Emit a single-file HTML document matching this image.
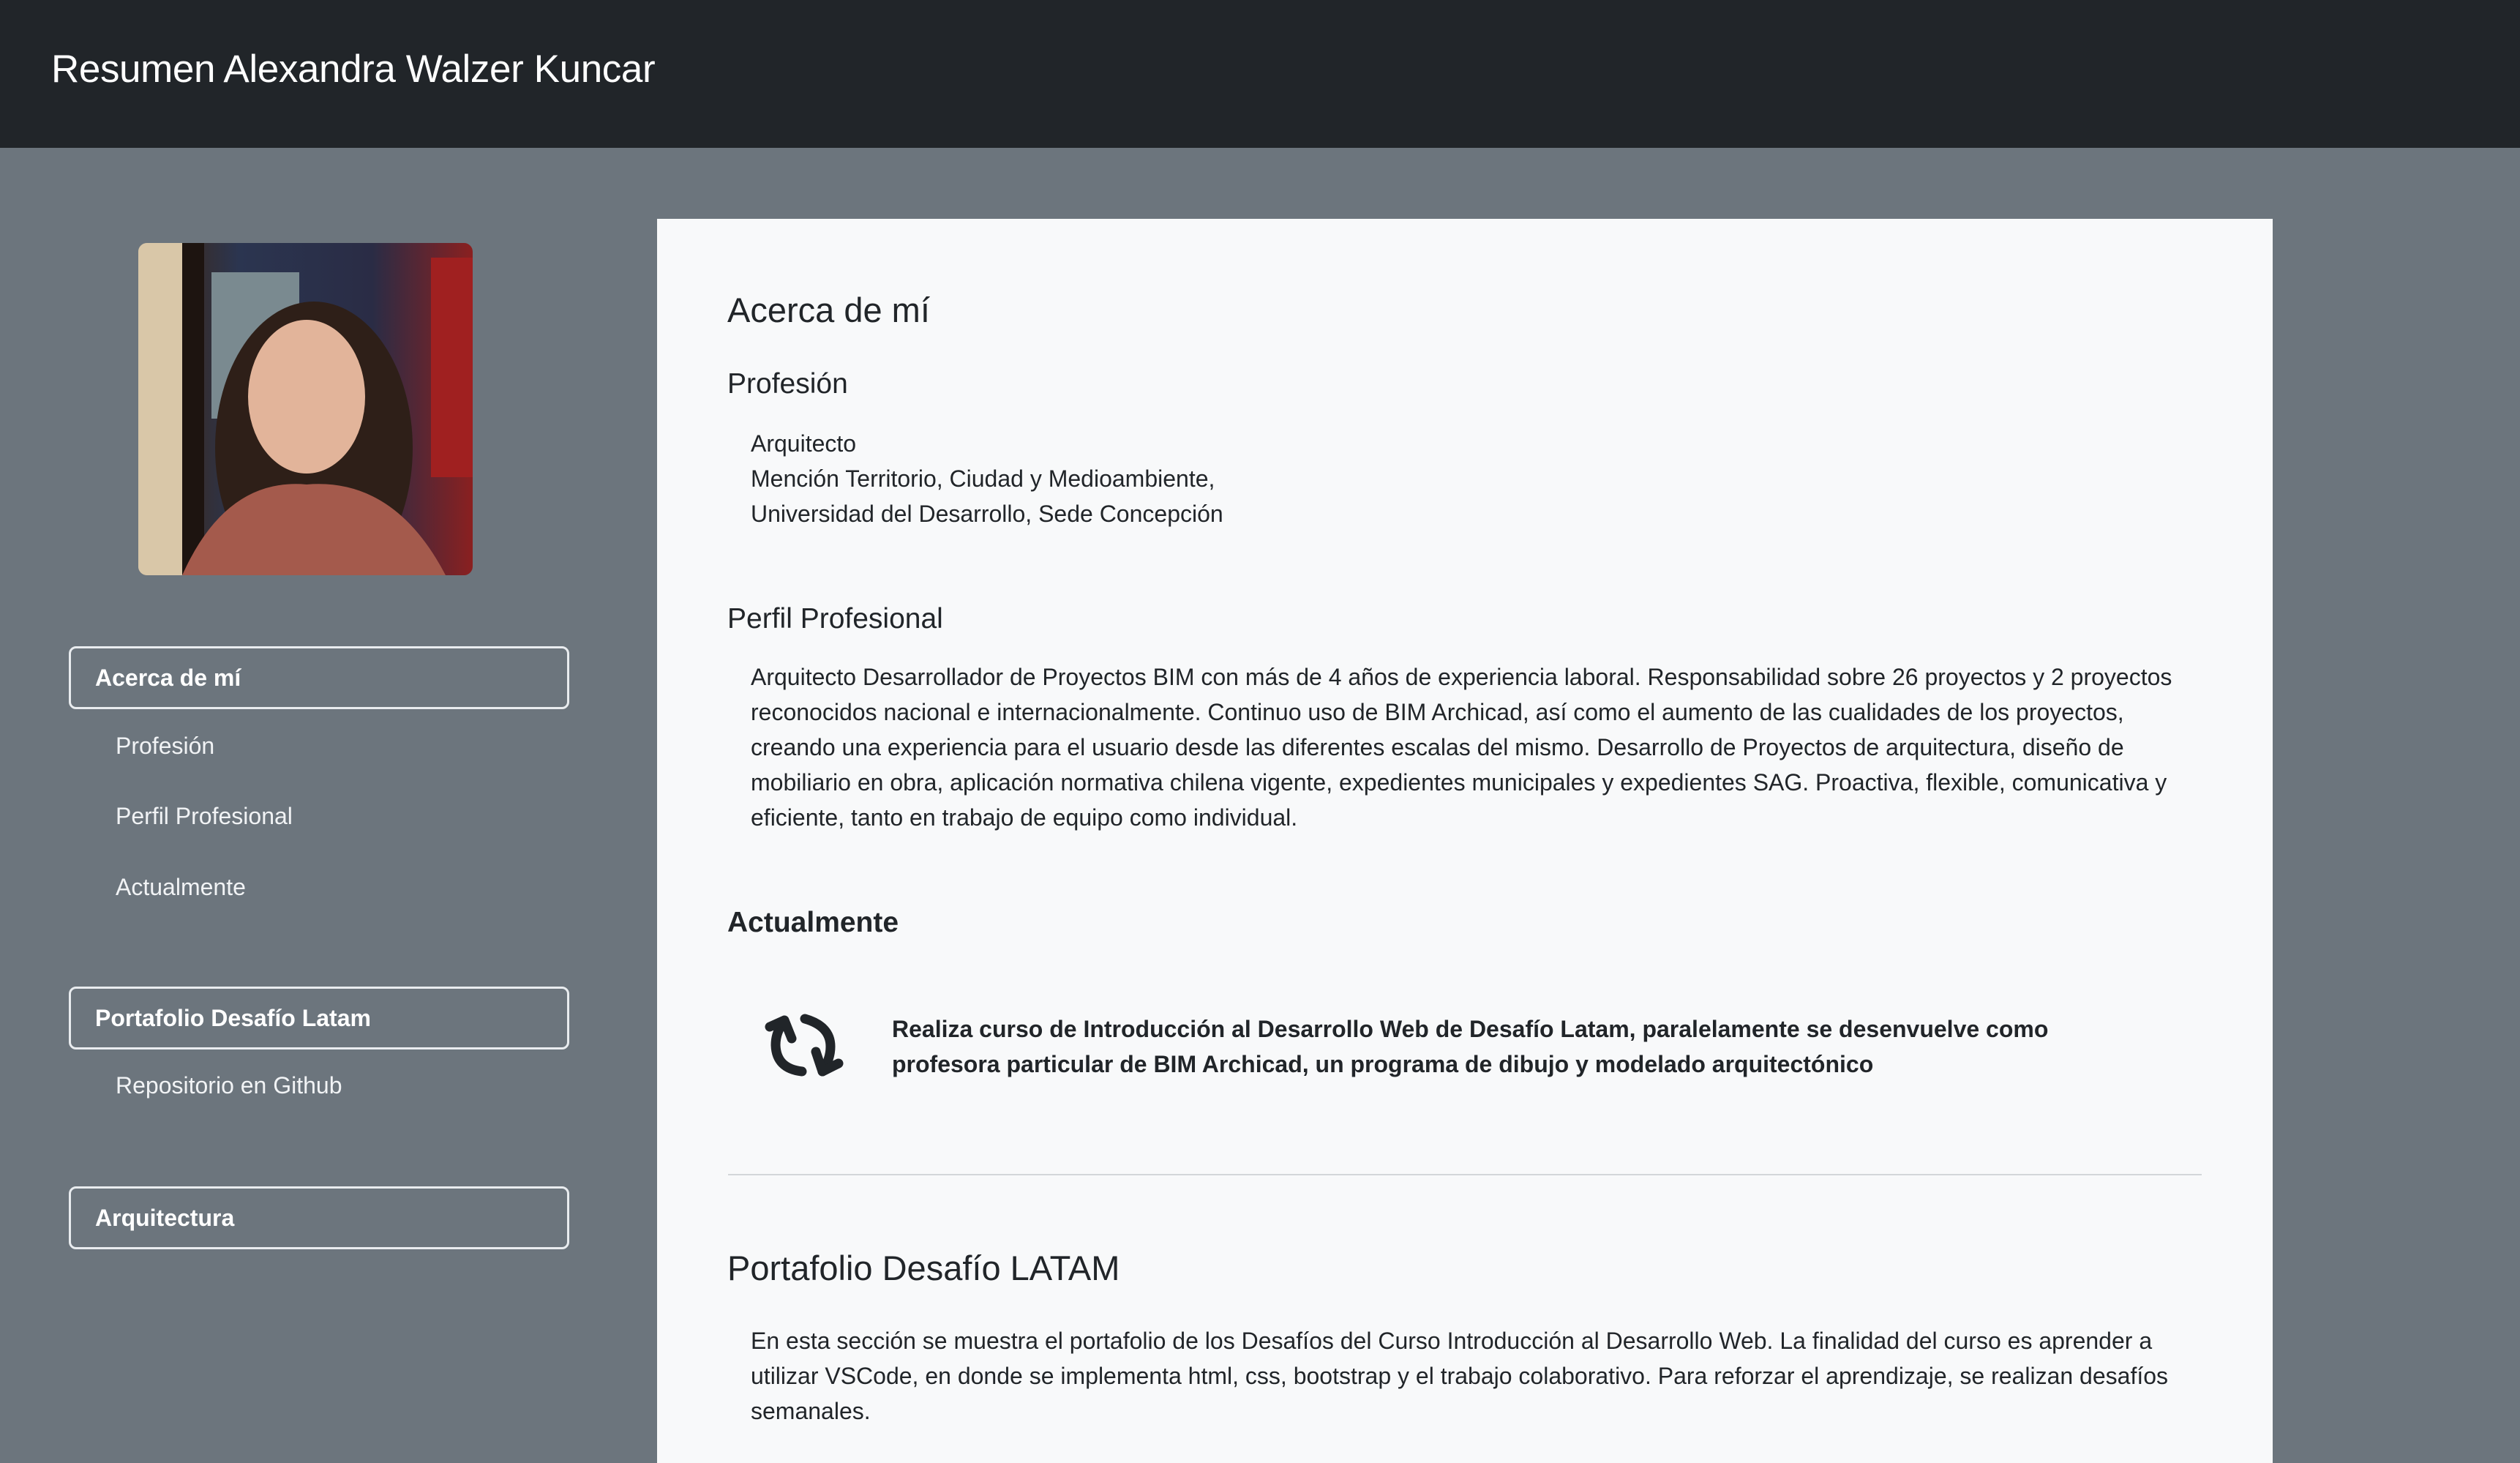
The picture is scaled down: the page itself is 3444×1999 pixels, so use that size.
<!DOCTYPE html>
<html><head><meta charset="utf-8"><style>
*{margin:0;padding:0;box-sizing:border-box}
body{width:3444px;height:1926px;overflow:hidden;background:#6c757d;font-family:"Liberation Sans",sans-serif;position:relative;color:#212529}
.hdr{position:absolute;left:0;top:0;width:3444px;height:202px;background:#212529}
.hdr h1{position:absolute;left:70px;top:64px;font-weight:normal;font-size:53px;color:#fff;letter-spacing:-0.4px}
.photo{position:absolute;left:189px;top:332px;width:457px;height:454px;border-radius:12px;overflow:hidden;background:linear-gradient(90deg,#c8b59a 0,#3a2a20 12%,#2b3550 30%,#2a2c45 70%,#8a2020 100%)}
.btn{position:absolute;left:94px;width:684px;height:86px;border:3px solid #e9ecef;border-radius:10px;color:#fff;font-weight:bold;font-size:32px;padding-left:33px;line-height:80px}
.sub{position:absolute;left:158px;color:#f1f3f5;font-size:32px}
.card{position:absolute;left:898px;top:299px;width:2208px;height:1700px;background:#f8f9fa}
.t{position:absolute;white-space:nowrap}
.p{position:absolute;left:1026px;font-size:32px;line-height:48px;color:#212529}
</style></head><body>
<div class="hdr"><h1>Resumen Alexandra Walzer Kuncar</h1></div>
<div class="photo">
<svg width="457" height="454" viewBox="0 0 457 454">
<rect x="0" y="0" width="60" height="454" fill="#d9c7a8"/>
<rect x="60" y="0" width="30" height="454" fill="#1d1410"/>
<rect x="100" y="40" width="120" height="200" fill="#7a8a90"/>
<rect x="400" y="20" width="57" height="300" fill="#a02020"/>
<ellipse cx="240" cy="280" rx="135" ry="200" fill="#2e1f18"/>
<ellipse cx="230" cy="210" rx="80" ry="105" fill="#e2b49a"/>
<path d="M60 454 Q120 320 230 330 Q350 320 420 454Z" fill="#a45a4c"/>
</svg></div>
<div class="btn" style="top:883px">Acerca de mí</div>
<div class="sub" style="top:1001px">Profesión</div>
<div class="sub" style="top:1097px">Perfil Profesional</div>
<div class="sub" style="top:1194px">Actualmente</div>
<div class="btn" style="top:1348px">Portafolio Desafío Latam</div>
<div class="sub" style="top:1465px">Repositorio en Github</div>
<div class="btn" style="top:1621px">Arquitectura</div>
<div class="card"></div>
<div class="t" style="left:994px;top:396px;font-size:47px">Acerca de mí</div>
<div class="t" style="left:994px;top:503px;font-size:39px">Profesión</div>
<div class="p" style="top:582px">Arquitecto<br>Mención Territorio, Ciudad y Medioambiente,<br>Universidad del Desarrollo, Sede Concepción</div>
<div class="t" style="left:994px;top:824px;font-size:39px">Perfil Profesional</div>
<div class="p" style="top:901px;width:1990px">Arquitecto Desarrollador de Proyectos BIM con más de 4 años de experiencia laboral. Responsabilidad sobre 26 proyectos y 2 proyectos reconocidos nacional e internacionalmente. Continuo uso de BIM Archicad, así como el aumento de las cualidades de los proyectos, creando una experiencia para el usuario desde las diferentes escalas del mismo. Desarrollo de Proyectos de arquitectura, diseño de mobiliario en obra, aplicación normativa chilena vigente, expedientes municipales y expedientes SAG. Proactiva, flexible, comunicativa y eficiente, tanto en trabajo de equipo como individual.</div>
<div class="t" style="left:994px;top:1239px;font-size:39px;font-weight:bold">Actualmente</div>
<svg style="position:absolute;left:990px;top:1340px" width="200" height="200" viewBox="0 0 200 200">
<g fill="none" stroke="#212529" stroke-width="13" stroke-linecap="round" stroke-linejoin="round">
<path d="M106 124 Q71 120 70 88 Q70 70 82 55"/>
<path d="M62 63 L82 54 L92 79"/>
<path d="M110 52 Q145 62 145 90 Q145 107 134 124"/>
<path d="M125 97 L134 124 L156 113"/>
</g></svg>
<div class="t" style="left:1219px;top:1382px;font-size:32px;line-height:48px;font-weight:bold">Realiza curso de Introducción al Desarrollo Web de Desafío Latam, paralelamente se desenvuelve como<br>profesora particular de BIM Archicad, un programa de dibujo y modelado arquitectónico</div>
<div style="position:absolute;left:995px;top:1604px;width:2014px;height:2px;background:#d3d6d9"></div>
<div class="t" style="left:994px;top:1705px;font-size:47px">Portafolio Desafío LATAM</div>
<div class="p" style="top:1808px;width:1990px">En esta sección se muestra el portafolio de los Desafíos del Curso Introducción al Desarrollo Web. La finalidad del curso es aprender a utilizar VSCode, en donde se implementa html, css, bootstrap y el trabajo colaborativo. Para reforzar el aprendizaje, se realizan desafíos semanales.</div>
</body></html>
